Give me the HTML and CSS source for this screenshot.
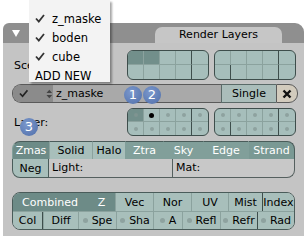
FILE: index.html
```html
<!DOCTYPE html>
<html lang="en">
<head>
    <meta charset="UTF-8">
    <title>Render Layers</title>
    <link rel="stylesheet" href="styles.css">
</head>
<body>
    <div class="panel">
        <div class="header">
            <span class="tri"></span>
            <div class="hdr-tab">Render Layers</div>
        </div>

        <div class="body">
            <!-- scene layers -->
            <div class="row scene-row">
                <span class="label">Scene:</span>
                <div class="layers tall">
                    <span class="on"></span><span class="on"></span><span></span><span class="sep"></span><span></span>
                    <span></span><span></span><span></span><span class="sep"></span><span></span>
                </div>
                <div class="layers tall last">
                    <span></span><span></span><span></span><span class="sep"></span><span></span>
                    <span class="sep"></span><span></span><span></span><span class="sep"></span><span></span>
                </div>
            </div>

            <!-- render layer name -->
            <div class="row name-row">
                <div class="name-field">
                    <span class="icons">
                        <svg width="10" height="9" viewBox="0 0 10 9"><path d="M1 4.5 L3.8 7.5 L9 1" fill="none" stroke="#222" stroke-width="1.8"/></svg>
                        <svg width="7" height="10" viewBox="0 0 7 10"><path d="M0.5 4 L3.5 0.5 L6.5 4 Z M0.5 6 L3.5 9.5 L6.5 6 Z" fill="#444"/></svg>
                    </span>
                    <span class="name">z_maske</span>
                </div>
                <button class="single">Single</button>
                <button class="del">
                    <svg width="10" height="10" viewBox="0 0 10 10"><path d="M1.5 1.5 L8.5 8.5 M8.5 1.5 L1.5 8.5" stroke="#111" stroke-width="2.4"/></svg>
                </button>
            </div>

            <!-- layer buttons -->
            <div class="row layer-row">
                <span class="label">Layer:</span>
                <div class="layers dots">
                    <span class="on"></span><span class="act"></span><span></span><span class="sep"></span><span></span>
                    <span></span><span></span><span></span><span class="sep"></span><span></span>
                </div>
                <div class="layers dots last">
                    <span></span><span></span><span></span><span class="sep"></span><span></span>
                    <span class="sep"></span><span></span><span></span><span class="sep"></span><span></span>
                </div>
            </div>

            <!-- render options -->
            <div class="opts">
                <div class="tabs">
                    <button class="sel dark">Zmas</button>
                    <button>Solid</button>
                    <button>Halo</button>
                    <button class="sel">Ztra</button>
                    <button class="sel">Sky</button>
                    <button class="sel">Edge</button>
                    <button class="sel strand">Strand</button>
                </div>
                <div class="sub-row">
                    <button class="neg">Neg</button>
                    <div class="field">Light:</div>
                    <div class="field mat">Mat:</div>
                </div>
            </div>

            <!-- passes -->
            <div class="passes">
                <div class="pass-row top">
                    <button class="sel dark">Combined</button>
                    <button class="sel dark">Z</button>
                    <button>Vec</button>
                    <button>Nor</button>
                    <button>UV</button>
                    <button>Mist</button>
                    <button class="outl">Index</button>
                </div>
                <div class="pass-row bottom">
                    <button class="outl-r">Col</button>
                    <button>Diff</button>
                    <button class="pt">Spe</button>
                    <button class="pt">Sha</button>
                    <button class="pt">A</button>
                    <button class="pt">Refl</button>
                    <button class="pt">Refr</button>
                    <button class="pt outl">Rad</button>
                </div>
            </div>
        </div>

        <span class="badge b1">1</span>
        <span class="badge b2">2</span>
        <span class="badge b3">3</span>
    </div>

    <!-- dropdown menu -->
    <div class="menu">
        <div class="item"><svg width="10" height="9" viewBox="0 0 10 9"><path d="M1 4.5 L3.8 7.5 L9 1" fill="none" stroke="#333" stroke-width="1.8"/></svg>z_maske</div>
        <div class="item"><svg width="10" height="9" viewBox="0 0 10 9"><path d="M1 4.5 L3.8 7.5 L9 1" fill="none" stroke="#333" stroke-width="1.8"/></svg>boden</div>
        <div class="item"><svg width="10" height="9" viewBox="0 0 10 9"><path d="M1 4.5 L3.8 7.5 L9 1" fill="none" stroke="#333" stroke-width="1.8"/></svg>cube</div>
        <div class="item add">ADD NEW</div>
    </div>
</body>
</html>
```

FILE: styles.css
```css
body {
    margin: 0;
    background-color: #ffffff;
    font-family: "DejaVu Sans", sans-serif;
    font-size: 11px;
    color: #000000;
}

button {
    font-family: inherit;
    font-size: 11px;
    margin: 0;
    padding: 0;
    border: none;
    color: #000000;
    background-color: #a8bfbb;
}

/* panel */
.panel {
    position: relative;
    width: 301px;
    margin: 23px 0 0 3px;
}

.header {
    display: flex;
    height: 20px;
    background-color: #8f8f8f;
    border-radius: 6px 9px 0 0;
}

.tri {
    width: 0;
    height: 0;
    margin: 7px 0 0 9px;
    border-left: 4px solid transparent;
    border-right: 4px solid transparent;
    border-top: 7px solid #ffffff;
}

.hdr-tab {
    width: 127px;
    margin: 4px 0 0 135px;
    background-color: #c6c6c6;
    border-radius: 7px 7px 0 0;
    text-align: center;
    line-height: 16px;
}

.body {
    background-color: #c4c4c4;
    padding: 7px 6px 8px 9px;
    height: 178px;
}

.row {
    display: flex;
    align-items: center;
}

.label {
    flex: 1;
    padding-left: 2px;
}

/* layer blocks */
.layers {
    display: grid;
    grid-template-columns: repeat(5, 16px);
    grid-auto-rows: 14px;
    border: 1px solid #3e4e4c;
    border-radius: 6px;
    overflow: hidden;
    background-color: #a6bebb;
    margin-right: 5px;
}

.layers.last {
    margin-right: 2px;
}

.layers span {
    box-sizing: border-box;
    border-right: 1px solid #8ba29e;
    border-bottom: 1px solid #8ba29e;
    display: flex;
    align-items: center;
    justify-content: center;
}

.layers span:nth-child(5n) {
    border-right: none;
}

.layers span:nth-child(n+6) {
    border-bottom: none;
}

.layers span.sep {
    border-right-color: #3e4e4c;
}

.layers span.on {
    background-color: #728f8b;
}

.layers.dots {
    grid-auto-rows: 13px;
}

.layers.dots span::after {
    content: "";
    width: 4px;
    height: 4px;
    border-radius: 50%;
    background-color: #8ea29f;
}

.layers.dots span.on::after {
    background-color: #7f9491;
}

.layers.dots span.act::after {
    width: 5px;
    height: 5px;
    background-color: #000000;
}

/* name row */
.name-row {
    margin-top: 4px;
    height: 19px;
}

.name-field {
    flex: 1;
    display: flex;
    height: 19px;
    box-sizing: border-box;
    border: 1px solid #5a5a5a;
    border-right: none;
    border-radius: 9px 0 0 9px;
    overflow: hidden;
    background-color: #a9a9a9;
}

.icons {
    display: flex;
    align-items: center;
    gap: 18px;
    width: 40px;
    padding-left: 6px;
    box-sizing: border-box;
    background-color: #8b8b8b;
}

.name {
    padding-left: 3px;
    line-height: 17px;
}

.single {
    width: 55px;
    height: 19px;
    border: 1px solid #5a6a68;
    border-right: none;
    background-color: #aabdba;
}

.del {
    width: 22px;
    height: 19px;
    border: 1px solid #5a5a5a;
    border-radius: 0 9px 9px 0;
    background-color: #d2cbbd;
    display: flex;
    align-items: center;
    justify-content: center;
}

/* layer row */
.layer-row {
    margin-top: 5px;
}

/* options */
.opts {
    margin-top: 5px;
    width: 283px;
}

.tabs {
    display: grid;
    grid-template-columns: 37px 43px 33px 38px 40px 45px 47px;
    height: 18px;
}

.tabs button {
    border-top: 1px solid #4a5c5a;
    border-left: 1px solid #8ba29e;
}

.tabs button:first-child {
    border-left: 1px solid #4a5c5a;
    border-radius: 8px 0 0 0;
}

.tabs .strand {
    border-right: 1px solid #4a5c5a;
    border-left-color: #4a5c5a;
    border-radius: 0 8px 0 0;
    background-color: #7a9994;
}

button.sel {
    background-color: #819f9a;
    color: #ffffff;
}

button.sel.dark {
    background-color: #6d8b87;
}

.tabs button.sel {
    border-left-color: #819f9a;
}

.sub-row {
    display: flex;
    height: 19px;
}

.neg {
    width: 37px;
    box-sizing: border-box;
    border: 1px solid #4a5c5a;
    border-top: none;
    border-radius: 0 0 0 8px;
}

.field {
    flex: 1;
    box-sizing: border-box;
    border: 1px solid #55605f;
    border-top: none;
    border-left: none;
    background-color: #c8c8c8;
    padding-left: 3px;
    line-height: 18px;
}

.field.mat {
    flex: 0 0 122px;
    border-radius: 0 0 8px 0;
}

/* passes */
.passes {
    margin-top: 14px;
    width: 283px;
    border: 1px solid #4a5c5a;
    border-radius: 8px;
    overflow: hidden;
    box-sizing: border-box;
}

.pass-row {
    display: grid;
}

.pass-row.top {
    grid-template-columns: 74px 28px 38px 38px 37px 34px 32px;
    height: 18px;
    border-bottom: 1px solid #8ba29e;
}

.pass-row.bottom {
    grid-template-columns: 30px 35px 38px 37px 29px 38px 37px 37px;
    height: 17px;
}

.pass-row button {
    border-left: 1px solid #8ba29e;
}

.pass-row button:first-child {
    border-left: none;
}

.pass-row button.sel {
    border-left-color: #6d8b87;
}

.pass-row button.outl {
    border-left-color: #3e4e4c;
}

.pass-row button.outl-r {
    border-right: 1px solid #3e4e4c;
}

.pt::before {
    content: "";
    display: inline-block;
    width: 5px;
    height: 5px;
    border-radius: 50%;
    background-color: #8ea29f;
    margin-right: 4px;
    vertical-align: 1px;
}

/* numbered badges */
.badge {
    position: absolute;
    width: 18px;
    height: 18px;
    border-radius: 50%;
    background: radial-gradient(circle at 40% 35%, #7b98cc, #4f6ea9);
    color: #ffffff;
    font-size: 13px;
    line-height: 18px;
    text-align: center;
}

.b1 { left: 121px; top: 63px; }
.b2 { left: 140px; top: 63px; }
.b3 { left: 17px; top: 95px; }

/* dropdown */
.menu {
    position: absolute;
    left: 29px;
    top: 0;
    width: 81px;
    height: 82px;
    padding-top: 9px;
    box-sizing: border-box;
    background-color: #f3f3f3;
    box-shadow: 2px 2px 2px rgba(0, 0, 0, 0.35);
}

.item {
    display: flex;
    align-items: center;
    height: 19px;
    padding-left: 6px;
    font-size: 11.5px;
}

.item svg {
    margin-right: 7px;
}

.item.add {
    padding-left: 6px;
}
```
